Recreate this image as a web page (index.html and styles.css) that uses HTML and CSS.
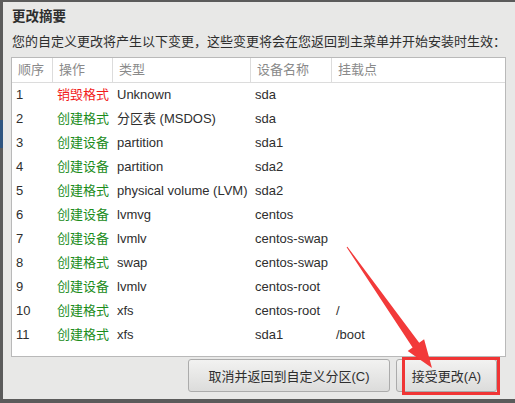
FILE: index.html
```html
<!DOCTYPE html>
<html lang="zh-CN">
<head>
<meta charset="utf-8">
<link rel="stylesheet" href="styles.css">
</head>
<body>
<div class="dialog">
  <div class="title">更改摘要</div>
  <div class="subtitle">您的自定义更改将产生以下变更，这些变更将会在您返回到主菜单并开始安装时生效：</div>
  <div class="table">
    <div class="row head">
      <div class="cell">顺序</div><div class="cell">操作</div><div class="cell">类型</div><div class="cell">设备名称</div><div class="cell last">挂载点</div>
    </div>
    <div class="row"><div class="cell">1</div><div class="cell destroy">销毁格式</div><div class="cell">Unknown</div><div class="cell">sda</div><div class="cell"></div></div>
    <div class="row"><div class="cell">2</div><div class="cell create">创建格式</div><div class="cell">分区表 (MSDOS)</div><div class="cell">sda</div><div class="cell"></div></div>
    <div class="row"><div class="cell">3</div><div class="cell create">创建设备</div><div class="cell">partition</div><div class="cell">sda1</div><div class="cell"></div></div>
    <div class="row"><div class="cell">4</div><div class="cell create">创建设备</div><div class="cell">partition</div><div class="cell">sda2</div><div class="cell"></div></div>
    <div class="row"><div class="cell">5</div><div class="cell create">创建格式</div><div class="cell">physical volume (LVM)</div><div class="cell">sda2</div><div class="cell"></div></div>
    <div class="row"><div class="cell">6</div><div class="cell create">创建设备</div><div class="cell">lvmvg</div><div class="cell">centos</div><div class="cell"></div></div>
    <div class="row"><div class="cell">7</div><div class="cell create">创建设备</div><div class="cell">lvmlv</div><div class="cell">centos-swap</div><div class="cell"></div></div>
    <div class="row"><div class="cell">8</div><div class="cell create">创建格式</div><div class="cell">swap</div><div class="cell">centos-swap</div><div class="cell"></div></div>
    <div class="row"><div class="cell">9</div><div class="cell create">创建设备</div><div class="cell">lvmlv</div><div class="cell">centos-root</div><div class="cell"></div></div>
    <div class="row"><div class="cell">10</div><div class="cell create">创建格式</div><div class="cell">xfs</div><div class="cell">centos-root</div><div class="cell">/</div></div>
    <div class="row"><div class="cell">11</div><div class="cell create">创建格式</div><div class="cell">xfs</div><div class="cell">sda1</div><div class="cell">/boot</div></div>
  </div>
  <div class="buttons">
    <button class="btn cancel">取消并返回到自定义分区(C)</button>
    <button class="btn accept">接受更改(A)</button>
  </div>
</div>
<div class="highlight"></div>
<svg class="arrow" width="515" height="403" viewBox="0 0 515 403">
  <polygon points="347.4,246.7 419.2,342.8 424.1,339.3 432,368 407.7,350.9 412.6,347.4 346.6,247.3" fill="#f23a3a"/>
</svg>
</body>
</html>
```

FILE: styles.css
```css
html, body {
  margin: 0;
  padding: 0;
}
body {
  width: 515px;
  height: 403px;
  overflow: hidden;
  background: linear-gradient(to bottom, #5b5b5b 0, #5b5b5b 120px, #2f5580 120px, #2f5580 148px, #5b5b5b 148px);
  font-family: "Liberation Sans", "Noto Sans CJK SC", sans-serif;
  color: #2e2e2e;
}
.dialog {
  box-sizing: border-box;
  margin: 2px 0 0 3px;
  height: 397px;
  padding: 7px 9px 0 8px;
  background: #e8e8e7;
  display: flex;
  flex-direction: column;
}
.title {
  font-size: 13.5px;
  font-weight: bold;
  line-height: 16px;
  padding-left: 1px;
}
.subtitle {
  margin-top: 9px;
  font-size: 13px;
  line-height: 16px;
  padding-left: 1px;
  white-space: nowrap;
}
.table {
  box-sizing: border-box;
  margin-top: 7px;
  height: 300px;
  background: #fff;
  border: 1px solid #b9b9b9;
  font-size: 13px;
}
.row {
  display: grid;
  grid-template-columns: 41px 60px 138px 81px 1fr;
  height: 24px;
  line-height: 24px;
}
.cell {
  padding-left: 4px;
  white-space: nowrap;
}
.head {
  border-bottom: 1px solid #dcdcdc;
  color: #8a8a8a;
}
.head .cell {
  padding-left: 6px;
  border-right: 1px solid #dcdcdc;
}
.head .cell.last {
  border-right: none;
}
.create {
  color: #1b8c1b;
}
.destroy {
  color: #f21b1b;
}
.buttons {
  margin-top: 2px;
  display: flex;
  justify-content: flex-end;
  gap: 6px;
  padding-right: 9px;
}
.btn {
  box-sizing: border-box;
  height: 33px;
  border: 1px solid #ababab;
  border-radius: 3px;
  background: linear-gradient(to bottom, #f2f2f1, #dcdcdb);
  font-family: "Liberation Sans", "Noto Sans CJK SC", sans-serif;
  font-size: 13px;
  color: #2e2e2e;
  padding: 0;
}
.cancel {
  width: 202px;
}
.accept {
  width: 101px;
}
.highlight {
  position: absolute;
  left: 402px;
  top: 357px;
  width: 98px;
  height: 38px;
  box-sizing: border-box;
  border: 3px solid #f03535;
}
.arrow {
  position: absolute;
  left: 0;
  top: 0;
}
```
